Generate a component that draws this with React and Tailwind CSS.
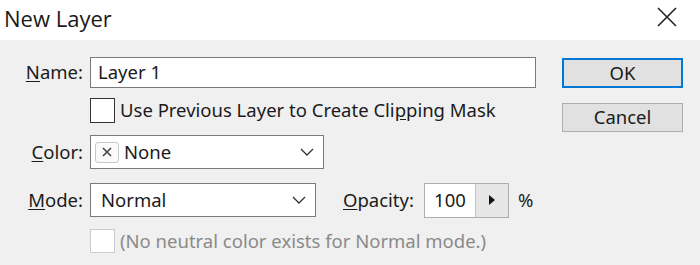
import React from "react";

const font = { fontFamily: '"Noto Sans", "Open Sans", sans-serif' };

function Chevron() {
  return (
    <svg width="16" height="10" viewBox="0 0 16 10" className="shrink-0">
      <path d="M2 2 L8 8 L14 2" fill="none" stroke="#333" strokeWidth="1.3" />
    </svg>
  );
}

export default function App() {
  return (
    <div
      className="w-[700px] h-[265px] bg-[#f0f0f0] text-[#1b1b1b] overflow-hidden"
      style={font}
    >
      {/* Title bar */}
      <div className="h-[40px] bg-white flex items-center justify-between">
        <div
          className="pl-[4px] text-[22px] leading-none text-[#1a1a1a] pb-[4px]"
          style={{ fontFamily: '"Open Sans", "Noto Sans", sans-serif' }}
        >
          New Layer
        </div>
        <svg width="22" height="22" viewBox="0 0 22 22" className="mr-[22px] mb-[6px]">
          <path d="M2 2 L20 20 M20 2 L2 20" stroke="#222" strokeWidth="1.6" fill="none" />
        </svg>
      </div>

      <div className="flex text-[18.5px] leading-none">
        {/* Main column */}
        <div className="flex flex-col">
          {/* Name */}
          <div className="flex items-center mt-[17px] h-[31px]">
            <div className="w-[84px] text-right pr-[1px]">
              <span className="underline underline-offset-2">N</span>ame:
            </div>
            <div className="ml-[6px] w-[446px] h-[31px] bg-white border border-[#7a7a7a] flex items-center pl-[7px]">
              Layer 1
            </div>
          </div>
          {/* Clipping */}
          <div className="flex items-center mt-[10px] h-[25px]">
            <div className="w-[90px]" />
            <div className="w-[25px] h-[25px] bg-white border border-[#333]" />
            <div className="ml-[5px]">
              Use Previous Layer to Create Cli
              <span className="underline underline-offset-2">p</span>ping Mask
            </div>
          </div>
          {/* Color */}
          <div className="flex items-center mt-[12px] h-[34px]">
            <div className="w-[84px] text-right pr-[1px]">
              <span className="underline underline-offset-2">C</span>olor:
            </div>
            <div className="ml-[6px] w-[234px] h-[34px] bg-white border border-[#7a7a7a] flex items-center pl-[4px] pr-[8px]">
              <div className="w-[24px] h-[21px] rounded-[3px] border border-[#c8c8c8] bg-[#fafafa] flex items-center justify-center">
                <svg width="10" height="10" viewBox="0 0 10 10">
                  <path d="M1 1 L9 9 M9 1 L1 9" stroke="#444" strokeWidth="1.6" />
                </svg>
              </div>
              <span className="ml-[5px] flex-1">None</span>
              <Chevron />
            </div>
          </div>
          {/* Mode */}
          <div className="flex items-center mt-[14px] h-[34px]">
            <div className="w-[84px] text-right pr-[1px]">
              <span className="underline underline-offset-2">M</span>ode:
            </div>
            <div className="ml-[6px] w-[226px] h-[34px] bg-white border border-[#7a7a7a] flex items-center pl-[10px] pr-[8px]">
              <span className="flex-1">Normal</span>
              <Chevron />
            </div>
            <div className="ml-[27px]">
              <span className="underline underline-offset-2">O</span>pacity:
            </div>
            <div className="ml-[10px] w-[85px] h-[35px] border border-[#adadad] flex">
              <div className="w-[50px] bg-white flex items-center justify-center">100</div>
              <div className="flex-1 bg-[#e6e6e6] border-l border-[#c4c4c4] flex items-center justify-center">
                <svg width="8" height="10" viewBox="0 0 8 10">
                  <path d="M1 0 L7 5 L1 10 Z" fill="#111" />
                </svg>
              </div>
            </div>
            <div className="ml-[9px]">%</div>
          </div>
          {/* Disabled */}
          <div className="flex items-center mt-[12px] h-[24px]">
            <div className="w-[90px]" />
            <div className="w-[25px] h-[24px] bg-white border border-[#cccccc]" />
            <div className="ml-[5px] text-[#8a8a8a]">
              (No neutral color exists for Normal mode.)
            </div>
          </div>
        </div>

        {/* Buttons */}
        <div className="ml-[26px] flex flex-col">
          <div className="mt-[18px] w-[121px] h-[30px] bg-[#e1e1e1] border-2 border-[#0078d7] flex items-center justify-center">
            OK
          </div>
          <div className="mt-[15px] w-[121px] h-[29px] bg-[#e1e1e1] border border-[#adadad] flex items-center justify-center">
            Cancel
          </div>
        </div>
      </div>
    </div>
  );
}
